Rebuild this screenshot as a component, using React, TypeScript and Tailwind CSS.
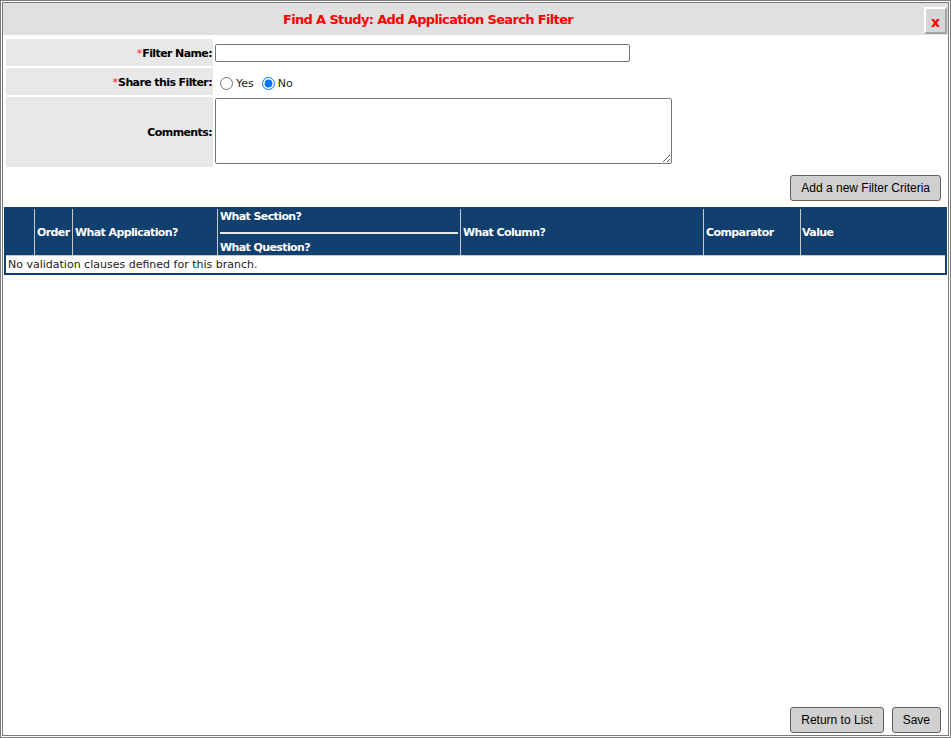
import React, { useState } from 'react';

const headCell = 'h-full pl-[2px] pt-[3px] flex items-center border-r border-[#c8c8c8]';

const FormLabel = ({ text, required }: { text: string; required?: boolean }) => (
	<div className="bg-[#e8e8e8] flex items-center justify-end pr-[1px] pt-[3px] text-[11px] font-bold text-black tracking-[-0.6px]">
		{required && <span className="text-[#ff1a1a] font-normal tracking-normal">*</span>}
		{text}
	</div>
);

const GrayButton = ({ label }: { label: string }) => (
	<button
		type="button"
		className="h-[26px] px-[10px] bg-[#d0d0d0] border border-[#5f5f5f] rounded-[3px] text-[12px] text-black font-['Liberation_Sans',Arial,sans-serif]"
	>
		{label}
	</button>
);

export default function App() {
	const [share, setShare] = useState('no');

	return (
		<div className="w-[951px] h-[738px] border-[3px] border-double border-[#7a7a7a] bg-white flex flex-col font-['DejaVu_Sans',Verdana,sans-serif]">
			{/* title bar */}
			<div className="h-[32px] bg-[#e0e0e0] flex items-start shrink-0">
				<div className="flex-1 h-full flex items-center justify-center pr-[71px] pt-[2px] text-[13px] font-bold text-[#f00] tracking-[-0.65px]">
					Find A Study: Add Application Search Filter
				</div>
				<button
					type="button"
					className="mt-[4px] mr-[1px] w-[23px] h-[27px] bg-[#d6d6d6] border-2 border-t-white border-l-white border-b-[#a3a3a3] border-r-[#a3a3a3] text-[#f00] text-[14px] font-bold leading-none flex items-center justify-center pt-[2px]"
				>
					x
				</button>
			</div>

			{/* filter form */}
			<div className="mt-[4px] ml-[3px] grid grid-cols-[207px_1fr] grid-rows-[27px_27px_70px] gap-y-[2px]">
				<FormLabel text="Filter Name:" required />
				<div className="flex items-center pl-[2px]">
					<input type="text" className="w-[415px] h-[18px] border border-[#767676] rounded-[2px] bg-white" />
				</div>

				<FormLabel text="Share this Filter:" required />
				<div className="flex items-center pl-[2px] pt-[3px] text-[11px] text-[#222]">
					<input
						type="radio"
						name="share"
						checked={share === 'yes'}
						onChange={() => setShare('yes')}
						className="ml-[5px] mr-[3px] w-[13px] h-[13px]"
					/>
					<span className="pt-[3px]">Yes</span>
					<input
						type="radio"
						name="share"
						checked={share === 'no'}
						onChange={() => setShare('no')}
						className="ml-[8px] mr-[3px] w-[13px] h-[13px]"
					/>
					<span className="pt-[3px]">No</span>
				</div>

				<FormLabel text="Comments:" />
				<div className="pl-[2px] pt-[1px]">
					<textarea className="block w-[457px] h-[66px] border border-[#767676] rounded-[2px] bg-white" />
				</div>
			</div>

			<div className="flex justify-end mt-[8px] mr-[7px]">
				<GrayButton label="Add a new Filter Criteria" />
			</div>

			{/* criteria table */}
			<div className="mt-[6px] mx-[1px] border-2 border-[#113f6e]">
				<div className="h-[47px] bg-[#113f6e] grid grid-cols-[29px_38px_145px_243px_243px_97px_1fr] text-[11px] font-bold text-white border-b border-[#c8c8c8] tracking-[-0.6px]">
					<div className={headCell}></div>
					<div className={headCell}>Order</div>
					<div className={headCell}>What Application?</div>
					<div className="h-full pl-[2px] pr-[2px] pt-[1px] border-r border-[#c8c8c8] flex flex-col justify-between">
						<span className="leading-[14px]">What Section?</span>
						<div className="h-[2px] bg-[#e6e6e6]"></div>
						<span className="leading-[14px]">What Question?</span>
					</div>
					<div className={headCell}>What Column?</div>
					<div className={headCell}>Comparator</div>
					<div className="h-full pl-[1px] pt-[3px] flex items-center">Value</div>
				</div>
				<div className="h-[17px] pl-[2px] pt-[2px] flex items-center text-[11px] text-[#222]">
					No validation clauses defined for this branch.
				</div>
			</div>

			<div className="flex-1"></div>

			<div className="flex justify-end gap-[8px] mr-[7px] mb-[2px]">
				<GrayButton label="Return to List" />
				<GrayButton label="Save" />
			</div>
		</div>
	);
}
